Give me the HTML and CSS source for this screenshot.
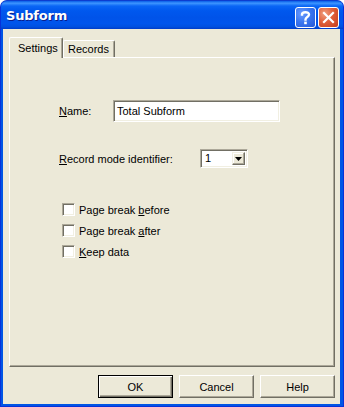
FILE: index.html
```html
<!DOCTYPE html>
<html>
<head>
<meta charset="utf-8">
<link rel="stylesheet" href="styles.css">
</head>
<body>
<div class="window">
  <div class="titlebar">
    <span class="title">Subform</span>
    <div class="tbtns">
      <div class="tbtn help"><svg width="21" height="21" viewBox="0 0 21 21"><path d="M7 7.5 C7 4.5 14 4.3 14 7.6 C14 10 10.5 10 10.5 12.6" fill="none" stroke="#fff" stroke-width="2.4" stroke-linecap="square"/><rect x="9.2" y="14.6" width="2.6" height="2.6" fill="#fff"/></svg></div>
      <div class="tbtn close"><svg width="21" height="21" viewBox="0 0 21 21"><path d="M6 6 L15 15 M15 6 L6 15" stroke="#fff" stroke-width="2.2" stroke-linecap="square"/></svg></div>
    </div>
  </div>
  <div class="client">
    <div class="tabs">
      <div class="tab active">Settings</div>
      <div class="tab">Records</div>
    </div>
    <div class="panel">
      <div class="row name-row">
        <label class="lbl lbl-name"><u>N</u>ame:</label>
        <div class="textbox">Total Subform</div>
      </div>
      <div class="row combo-row">
        <label class="lbl lbl-rec"><u>R</u>ecord mode identifier:</label>
        <div class="combo">
          <span class="combo-val">1</span>
          <span class="combo-btn"><svg width="7" height="4" viewBox="0 0 7 4"><path d="M0 0H7L3.5 4Z" fill="#000"/></svg></span>
        </div>
      </div>
      <div class="checks">
        <div class="check"><span class="box"></span><span>Page break <u>b</u>efore</span></div>
        <div class="check"><span class="box"></span><span>Page break <u>a</u>fter</span></div>
        <div class="check"><span class="box"></span><span><u>K</u>eep data</span></div>
      </div>
    </div>
    <div class="buttons">
      <div class="btn default"><span>OK</span></div>
      <div class="btn"><span>Cancel</span></div>
      <div class="btn"><span>Help</span></div>
    </div>
  </div>
</div>
</body>
</html>
```
FILE: styles.css
```css
html, body {
  margin: 0;
  padding: 0;
  background: #ffffff;
}
body {
  width: 344px;
  height: 407px;
  overflow: hidden;
  font-family: "Liberation Sans", Arial, sans-serif;
  font-size: 11px;
  color: #000;
}
.window {
  width: 344px;
  height: 407px;
  box-sizing: border-box;
  background: #0055e5;
  border-radius: 7px 7px 0 0;
  border: 1px solid #0831d9;
  border-top-color: #0c3dd0;
  display: flex;
  flex-direction: column;
  overflow: hidden;
}
.titlebar {
  height: 28px;
  flex: none;
  display: flex;
  align-items: center;
  justify-content: space-between;
  padding: 0 4px 0 5px;
  background: linear-gradient(to bottom, #0a5fe8 0%, #3d95ff 8%, #0a66f5 18%, #0058ee 35%, #0053e9 60%, #0055ec 80%, #0050e0 92%, #003cc8 100%);
}
.title {
  color: #fff;
  font-family: "DejaVu Sans", sans-serif;
  font-weight: bold;
  font-size: 13px;
  text-shadow: 1px 1px 0 #0a1e8c;
  letter-spacing: -0.2px;
  margin-top: 1px;
}
.tbtns {
  display: flex;
  gap: 2px;
  margin-top: 4px;
}
.tbtn {
  width: 21px;
  height: 21px;
  box-sizing: border-box;
  border: 1px solid #fff;
  border-radius: 3px;
  display: flex;
  align-items: center;
  justify-content: center;
  overflow: hidden;
}
.tbtn svg {
  flex: none;
  margin: -1px;
}
.help {
  background: radial-gradient(circle at 30% 30%, #6a9cff 0%, #3b77f0 45%, #2358d8 100%);
}
.close {
  background: radial-gradient(circle at 30% 30%, #f0a080 0%, #e0603a 45%, #c43c1c 100%);
}
.client {
  flex: 1;
  margin: 0 3px 3px 2px;
  background: #ece9d8;
  display: flex;
  flex-direction: column;
  padding: 8px 5px 6px 6px;
}
.tabs {
  display: flex;
  align-items: flex-end;
  height: 20px;
  position: relative;
  z-index: 1;
}
.tab {
  height: 17px;
  box-sizing: border-box;
  border-top: 1px solid #fff;
  border-left: 1px solid #fff;
  border-right: 1px solid #716f64;
  box-shadow: inset -1px 0 #aca899;
  border-radius: 2px 2px 0 0;
  padding: 2px 5px 0 4px;
  line-height: 13px;
  background: #ece9d8;
}
.tab.active {
  height: 21px;
  margin-bottom: -1px;
  width: 54px;
  padding: 4px 0 0 8px;
}
.panel {
  height: 310px;
  box-sizing: border-box;
  border-top: 1px solid #fff;
  border-left: 1px solid #fff;
  border-right: 1px solid #716f64;
  border-bottom: 1px solid #716f64;
  box-shadow: inset -1px -1px #aca899;
  padding: 42px 0 0 49px;
  display: flex;
  flex-direction: column;
}
.row {
  display: flex;
  align-items: center;
}
.lbl {
  flex: none;
}
.lbl-name {
  width: 54px;
}
.lbl-rec {
  width: 141px;
}
.textbox {
  width: 167px;
  height: 22px;
  box-sizing: border-box;
  background: #fff;
  border-top: 1px solid #aca899;
  border-left: 1px solid #aca899;
  border-right: 1px solid #fff;
  border-bottom: 1px solid #fff;
  box-shadow: inset 1px 1px #716f64, inset -1px -1px #f1efe2;
  padding: 4px 0 0 3px;
  line-height: 13px;
}
.combo-row {
  margin-top: 27px;
}
.combo {
  width: 48px;
  height: 19px;
  box-sizing: border-box;
  background: #fff;
  border-top: 1px solid #aca899;
  border-left: 1px solid #aca899;
  border-right: 1px solid #fff;
  border-bottom: 1px solid #fff;
  box-shadow: inset 1px 1px #716f64, inset -1px -1px #f1efe2;
  display: flex;
  align-items: stretch;
  padding: 2px;
}
.combo-val {
  flex: 1;
  padding-left: 2px;
  line-height: 13px;
}
.combo-btn {
  width: 13px;
  box-sizing: border-box;
  background: #ece9d8;
  border-top: 1px solid #f1efe2;
  border-left: 1px solid #f1efe2;
  border-right: 1px solid #716f64;
  border-bottom: 1px solid #716f64;
  box-shadow: inset -1px -1px #aca899, inset 1px 1px #fff;
  display: flex;
  align-items: center;
  justify-content: center;
}
.checks {
  margin-top: 31px;
  display: flex;
  flex-direction: column;
  margin-left: 3px;
}
.check {
  height: 21px;
  display: flex;
  align-items: center;
}
.box {
  width: 13px;
  height: 13px;
  box-sizing: border-box;
  background: #fff;
  border-top: 1px solid #aca899;
  border-left: 1px solid #aca899;
  border-right: 1px solid #fff;
  border-bottom: 1px solid #fff;
  box-shadow: inset 1px 1px #716f64, inset -1px -1px #f1efe2;
  margin-right: 4px;
  flex: none;
}
.buttons {
  display: flex;
  justify-content: flex-end;
  gap: 6px;
  margin-top: 8px;
}
.btn {
  width: 75px;
  height: 23px;
  box-sizing: border-box;
  border-top: 1px solid #fff;
  border-left: 1px solid #fff;
  border-right: 1px solid #716f64;
  border-bottom: 1px solid #716f64;
  box-shadow: inset -1px -1px #aca899;
  display: flex;
  align-items: center;
  justify-content: center;
  background: #ece9d8;
}
.btn.default {
  border: 1px solid #000;
  box-shadow: inset 1px 1px #fff, inset -1px -1px #716f64, inset -2px -2px #aca899;
}
```
